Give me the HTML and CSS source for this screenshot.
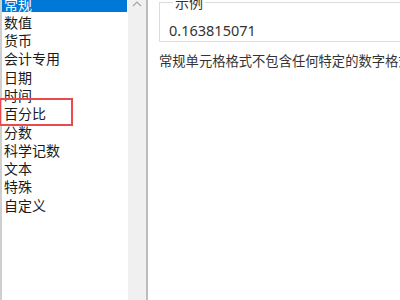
FILE: index.html
```html
<!DOCTYPE html>
<html lang="zh-CN">
<head>
    <meta charset="UTF-8">
    <title>设置单元格格式</title>
    <link rel="stylesheet" href="styles.css">
</head>
<body>
    <div class="listbox">
        <ul class="categories">
            <li class="selected">常规</li>
            <li>数值</li>
            <li>货币</li>
            <li>会计专用</li>
            <li>日期</li>
            <li>时间</li>
            <li class="marked">百分比</li>
            <li>分数</li>
            <li>科学记数</li>
            <li>文本</li>
            <li>特殊</li>
            <li>自定义</li>
        </ul>
        <div class="scrollbar">
            <svg class="arrow" width="10" height="7" viewBox="0 0 10 7">
                <path d="M1 6 L5 2 L9 6" fill="none" stroke="#a6a6a6" stroke-width="1.2"/>
            </svg>
        </div>
    </div>

    <div class="details">
        <fieldset class="sample">
            <legend>示例</legend>
            <div class="sample-value">0.163815071</div>
        </fieldset>
        <p class="hint">常规单元格格式不包含任何特定的数字格式。</p>
    </div>
</body>
</html>
```

FILE: styles.css
```css
body {
    margin: 0;
    width: 400px;
    height: 300px;
    overflow: hidden;
    display: flex;
    background-color: #fff;
    font-family: "Noto Sans", "Noto Sans CJK SC", sans-serif;
    color: #1a1a1a;
}
.listbox {
    position: relative;
    display: flex;
    width: 144px;
    height: 300px;
    flex-shrink: 0;
    border-left: 2px solid #cfcfcf;
    border-right: 2px solid #bdbdbd;
}
.categories {
    list-style: none;
    margin: -6px 0 0 0;
    padding: 0;
    width: 125px;
}
.categories li {
    box-sizing: border-box;
    height: 18.3px;
    padding: 1.5px 0 0 2px;
    line-height: 17px;
    font-family: "Noto Sans CJK SC", sans-serif;
    font-size: 14px;
    white-space: nowrap;
}
.categories li.selected {
    background-color: #0078d7;
    color: #fff;
}
.categories li.marked {
    position: relative;
}
.categories li.marked::after {
    content: "";
    position: absolute;
    left: -3px;
    top: -6px;
    width: 70px;
    height: 24px;
    border: 2px solid #e84a4f;
}
.scrollbar {
    width: 18px;
    margin-left: 1px;
    background-color: #f0f0f0;
    display: flex;
    justify-content: center;
}
.details {
    flex: 1;
    padding-left: 11px;
}
.sample {
    margin: -7px 0 0 0;
    padding: 9px 10px 6px 9px;
    width: 300px;
    height: 32px;
    border: 1px solid #dcdcdc;
}
.sample legend {
    margin-left: 4px;
    padding: 0 2px;
    font-family: "Noto Sans CJK SC", sans-serif;
    font-size: 14px;
    line-height: 18px;
    color: #333;
}
.sample-value {
    font-size: 14.5px;
    line-height: 20px;
    color: #333;
}
.hint {
    margin: 10px 0 0 0;
    font-family: "Noto Sans CJK SC", sans-serif;
    font-size: 13.3px;
    line-height: 18px;
    color: #333;
    white-space: nowrap;
}
```
